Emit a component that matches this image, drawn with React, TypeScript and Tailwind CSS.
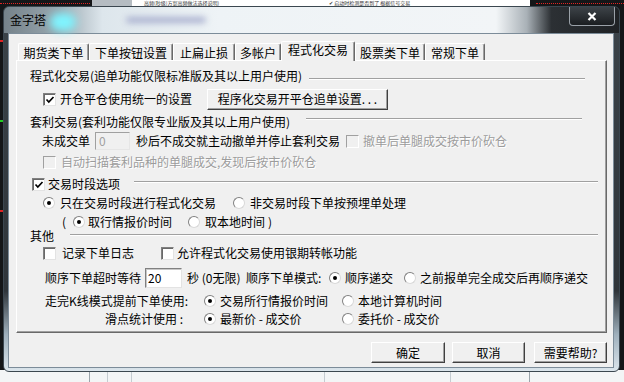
import React from "react";

type BoxProps = { on?: boolean; off?: boolean; cls?: string };

const Check = ({ on = false, off = false, cls = "" }: BoxProps) => (
  <span
    className={
      off
        ? `relative w-[13px] h-[13px] shrink-0 border border-t-[#a0a0a0] border-l-[#a0a0a0] border-r-white border-b-white bg-[#f0f0f0] ${cls}`
        : `relative w-[13px] h-[13px] shrink-0 border border-t-[#808080] border-l-[#808080] border-r-[#e3e3e3] border-b-[#e3e3e3] bg-white shadow-[inset_1px_1px_0_#696969] ${cls}`
    }
  >
    {on && (
      <svg className="absolute left-[1px] top-[1px]" width="10" height="10" viewBox="0 0 10 10">
        <path d="M1.5 4.5 L3.8 7 L8.5 2" stroke="#000" strokeWidth="1.7" fill="none" />
      </svg>
    )}
  </span>
);

const Radio = ({ on = false, cls = "" }: BoxProps) => (
  <span
    className={`relative w-[12px] h-[12px] shrink-0 rounded-full bg-white border border-t-[#808080] border-l-[#808080] border-r-[#d8d8d8] border-b-[#d8d8d8] ${cls}`}
  >
    {on && <span className="absolute left-[3px] top-[3px] w-[4px] h-[4px] rounded-full bg-black" />}
  </span>
);

const Rule = ({ cls }: { cls: string }) => (
  <div className={`h-[2px] shrink-0 border-t border-t-[#a0a0a0] border-b border-b-white ${cls}`} />
);

const Btn = ({ label, cls }: { label: string; cls: string }) => (
  <button
    className={`h-[21px] shrink-0 bg-[#f0f0f0] border border-t-white border-l-white border-r-[#404040] border-b-[#404040] shadow-[inset_-1px_-1px_0_#a0a0a0] text-[12px] leading-[14px] text-black ${cls}`}
  >
    {label}
  </button>
);

const tabs = [
  { label: "期货类下单", w: "w-[71px]" },
  { label: "下单按钮设置", w: "w-[84px]" },
  { label: "止扁止损", w: "w-[62px]" },
  { label: "多帐户", w: "w-[46px]" },
  { label: "程式化交易", w: "w-[74px]", active: true },
  { label: "股票类下单", w: "w-[70px]" },
  { label: "常规下单", w: "w-[60px]" },
];

const gray = "text-[#9c9c9c] [text-shadow:1px_1px_0_#ffffff]";

export default function App() {
  return (
    <div className="relative w-[624px] h-[382px] overflow-hidden bg-[#141618] text-[12px] leading-[14px] text-black [font-family:'Noto_Sans_CJK_SC','Noto_Sans',sans-serif]">
      {/* the application behind the dialog */}
      <div className="absolute left-0 top-[3px] w-[90px] border-t border-dotted border-[#e02424]" />
      <div className="absolute left-[92px] top-0 w-[40px] h-[6px] bg-[#b5bcc2]" />
      <div className="absolute left-[132px] top-0 w-[398px] h-[6px] bg-white flex items-center whitespace-nowrap text-[5px] leading-[6px] text-[#333]">
        <span className="ml-[12px]">高频(秒级)方案高频做法选择说明)</span>
        <span className="ml-[110px]">✔ 启动时检测是否到了 根据信号交易</span>
      </div>
      <div className="absolute left-[536px] top-[3px] w-[88px] border-t border-dotted border-[#e02424]" />
      <div className="absolute left-0 top-[40px] w-[3px] h-[2px] bg-[#d22]" />
      <div className="absolute left-0 top-[120px] w-[3px] h-[2px] bg-[#2c2]" />
      <div className="absolute left-0 top-[210px] w-[3px] h-[2px] bg-[#d22]" />
      <div className="absolute left-0 bottom-0 w-[624px] h-[12px] bg-[#f3f5f6]">
        <div className="absolute left-[89px] top-0 h-[12px] border-l border-[#9aa4ab]" />
        <div className="absolute left-[107px] top-0 h-[12px] border-l border-[#c5ccd1]" />
        <div className="absolute left-[131px] top-0 h-[12px] border-l border-[#c5ccd1]" />
        <div className="absolute left-[324px] top-0 h-[12px] border-l border-[#c5ccd1]" />
        <div className="absolute left-[450px] top-0 h-[12px] border-l border-[#c5ccd1]" />
        <div className="absolute left-[529px] top-0 h-[12px] border-l border-[#9aa4ab]" />
      </div>

      {/* dialog window */}
      <div className="absolute left-[3px] top-[6px] w-[617px] h-[366px] rounded-[6px] overflow-hidden border border-[#3b4750] bg-[linear-gradient(180deg,#3b4349_0%,#2f353a_78%,#9fb0bc_90%,#dbe5ec_100%)] flex flex-col">
        <div className="relative h-[26px] shrink-0 bg-[linear-gradient(90deg,#75828a_0%,#9aa8b0_9%,#dde6ec_16%,#eef3f6_35%,#f2f5f7_80%,#a9b1b7_85%,#2c3034_89%,#1f2225_100%)]">
          <div className="absolute left-[46px] top-[6px] w-[26px] h-[18px] rounded-full bg-[#7ff4ff] blur-[4px]" />
          <div className="absolute left-[122px] top-[10px] w-[80px] h-[6px] rounded-full bg-[#a9b0cf] blur-[3px]" />
          <div className="absolute left-[6px] top-0 h-[26px] flex items-center">金字塔</div>
          <div className="absolute right-[4px] top-0 w-[46px] h-[19px] rounded-b-[4px] border border-t-0 border-[#9aa1a8] bg-[linear-gradient(180deg,#3d4348,#1b1e21)] flex items-center justify-center">
            <svg width="10" height="9" viewBox="0 0 10 9">
              <path d="M1.5 1 L8.5 8 M8.5 1 L1.5 8" stroke="#ffffff" strokeWidth="2.2" />
            </svg>
          </div>
        </div>

        <div className="ml-[4px] w-[606px] h-[335px] shrink-0 border border-[#7c8c99] bg-[#f0f0f0] flex flex-col">
          {/* tabs */}
          <div className="mt-[7px] ml-[9px] h-[19px] flex items-end">
            {tabs.map((t) =>
              t.active ? (
                <div
                  key={t.label}
                  className={`relative z-10 h-[20px] -mb-[1px] pb-[4px] bg-[#f0f0f0] rounded-t-[2px] border-t border-l border-t-white border-l-white border-r border-r-[#696969] shadow-[inset_-1px_0_0_#a0a0a0] flex items-center justify-center whitespace-nowrap ${t.w}`}
                >
                  {t.label}
                </div>
              ) : (
                <div
                  key={t.label}
                  className={`h-[17px] pt-[1px] bg-[#f0f0f0] rounded-t-[2px] border-t border-l border-t-white border-l-white border-r border-r-[#696969] shadow-[inset_-1px_0_0_#a0a0a0] flex items-center justify-center whitespace-nowrap ${t.w}`}
                >
                  {t.label}
                </div>
              )
            )}
          </div>

          {/* tab page */}
          <div className="ml-[7px] w-[591px] h-[273px] shrink-0 border border-t-white border-l-white border-r-[#696969] border-b-[#696969] shadow-[inset_-1px_-1px_0_#a0a0a0] flex flex-col whitespace-nowrap">
            <div className="mt-[8px] h-[14px] flex items-center">
              <span className="ml-[13px] shrink-0">程式化交易(追单功能仅限标准版及其以上用户使用)</span>
              <Rule cls="ml-[7px] w-[276px] translate-y-[3px]" />
            </div>

            <div className="mt-[9px] h-[14px] flex items-center">
              <Check on cls="ml-[26px]" />
              <span className="ml-[4px]">开仓平仓使用统一的设置</span>
              <Btn label="程序化交易开平仓追单设置. . ." cls="ml-[15px] w-[181px] h-[20px]" />
            </div>

            <div className="mt-[9px] h-[14px] flex items-center">
              <span className="ml-[13px] shrink-0">套利交易(套利功能仅限专业版及其以上用户使用)</span>
              <Rule cls="ml-[16px] w-[276px] -translate-y-[3px]" />
            </div>

            <div className="mt-[5px] h-[14px] flex items-center">
              <span className="ml-[25px]">未成交单</span>
              <span className="ml-[5px] w-[35px] h-[18px] shrink-0 border border-t-[#a0a0a0] border-l-[#a0a0a0] border-r-[#e6e6e6] border-b-[#e6e6e6] bg-[#f0f0f0] pl-[3px] leading-[16px] text-[#a0a0a0]">
                0
              </span>
              <span className="ml-[6px]">秒后不成交就主动撤单并停止套利交易</span>
              <Check off cls="ml-[6px]" />
              <span className={`ml-[4px] ${gray}`}>撤单后单腿成交按市价砍仓</span>
            </div>

            <div className="mt-[7px] h-[14px] flex items-center">
              <Check off cls="ml-[26px]" />
              <span className={`ml-[5px] ${gray}`}>自动扫描套利品种的单腿成交,发现后按市价砍仓</span>
            </div>

            <div className="mt-[8px] h-[14px] flex items-center">
              <Check on cls="ml-[15px]" />
              <span className="ml-[3px] shrink-0">交易时段选项</span>
              <Rule cls="ml-[14px] w-[464px] -translate-y-[2px]" />
            </div>

            <div className="mt-[5px] h-[14px] flex items-center">
              <Radio on cls="ml-[26px]" />
              <span className="ml-[5px]">只在交易时段进行程式化交易</span>
              <Radio cls="ml-[17px]" />
              <span className="ml-[5px]">非交易时段下单按预埋单处理</span>
            </div>

            <div className="mt-[5px] h-[14px] flex items-center">
              <span className="ml-[45px] w-[11px] shrink-0">(</span>
              <Radio on />
              <span className="ml-[3px]">取行情报价时间</span>
              <Radio cls="ml-[16px]" />
              <span className="ml-[5px]">取本地时间</span>
              <span className="ml-[3px]">)</span>
            </div>

            <div className="mt-0 h-[14px] flex items-center">
              <span className="ml-[13px] shrink-0">其他</span>
              <Rule cls="ml-[16px] w-[528px] -translate-y-[1px]" />
            </div>

            <div className="mt-[3px] h-[14px] flex items-center">
              <Check cls="ml-[26px]" />
              <span className="ml-[6px]">记录下单日志</span>
              <Check cls="ml-[27px]" />
              <span className="ml-[3px]">允许程式化交易使用银期转帐功能</span>
            </div>

            <div className="mt-[11px] h-[14px] flex items-center">
              <span className="ml-[28px]">顺序下单超时等待</span>
              <span className="ml-[4px] w-[37px] h-[20px] shrink-0 border border-t-[#808080] border-l-[#808080] border-r-[#e3e3e3] border-b-[#e3e3e3] bg-white shadow-[inset_1px_1px_0_#c8c8c8] pl-[2px] leading-[18px]">
                20
              </span>
              <span className="ml-[5px] w-[57px] shrink-0">秒 (0无限)</span>
              <span className="ml-[2px] w-[80px] shrink-0">顺序下单模式:</span>
              <Radio on cls="ml-[3px]" />
              <span className="ml-[4px] w-[48px] shrink-0">顺序递交</span>
              <Radio cls="ml-[11px]" />
              <span className="ml-[4px]">之前报单完全成交后再顺序递交</span>
            </div>

            <div className="mt-[9px] h-[14px] flex items-center">
              <span className="ml-[28px] w-[159px] shrink-0">走完K线模式提前下单使用:</span>
              <Radio on />
              <span className="ml-[4px] w-[122px] shrink-0">交易所行情报价时间</span>
              <Radio />
              <span className="ml-[4px]">本地计算机时间</span>
            </div>

            <div className="mt-[4px] h-[14px] flex items-center">
              <span className="ml-[88px] w-[99px] shrink-0">滑点统计使用 :</span>
              <Radio on />
              <span className="ml-[4px] w-[122px] shrink-0">最新价 - 成交价</span>
              <Radio />
              <span className="ml-[4px]">委托价 - 成交价</span>
            </div>
          </div>

          {/* dialog buttons */}
          <div className="mt-[9px] ml-[362px] flex">
            <Btn label="确定" cls="w-[74px]" />
            <Btn label="取消" cls="ml-[7px] w-[73px]" />
            <Btn label="需要帮助?" cls="ml-[9px] w-[73px]" />
          </div>
        </div>
      </div>
    </div>
  );
}
